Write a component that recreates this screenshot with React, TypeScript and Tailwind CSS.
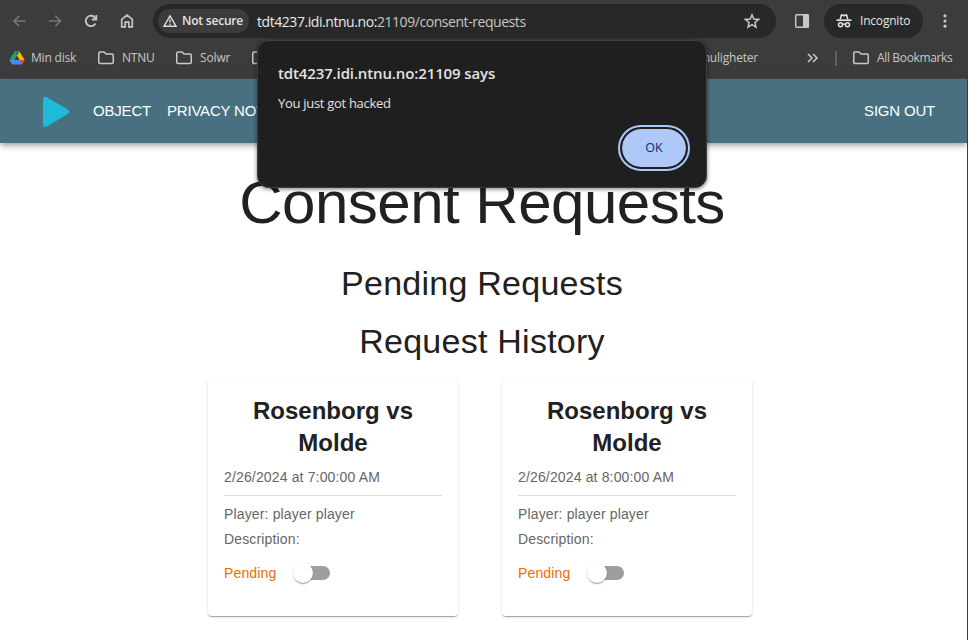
import React from 'react';

const UI = "font-['Open_Sans','Noto_Sans',sans-serif]";

function Folder({ className = '' }: { className?: string }) {
  return (
    <svg className={`shrink-0 ${className}`} width="18" height="16" viewBox="0 0 18 16" fill="none" stroke="#c7c7c7" strokeWidth="1.5" strokeLinejoin="round">
      <path d="M1.75 3.4c0-.8.5-1.4 1.3-1.4h4.1l1.9 2h6c.8 0 1.2.5 1.2 1.3v7c0 .8-.4 1.2-1.2 1.2H3c-.8 0-1.25-.4-1.25-1.2z" />
    </svg>
  );
}

function Toolbar() {
  return (
    <div className="flex h-[42px] items-center">
      <svg className="ml-[12px] shrink-0" width="16" height="16" viewBox="0 0 16 16" fill="none" stroke="#777" strokeWidth="1.6">
        <path d="M13.5 8H2.2M7.3 2.7L2 8l5.3 5.3" />
      </svg>
      <svg className="ml-[19px] shrink-0" width="16" height="16" viewBox="0 0 16 16" fill="none" stroke="#777" strokeWidth="1.6">
        <path d="M2 8h11.3M8.2 2.7L13.5 8l-5.3 5.3" />
      </svg>
      <svg className="ml-[20px] shrink-0" width="16" height="16" viewBox="0 0 16 16" fill="none" stroke="#c7c7c7" strokeWidth="1.8">
        <path d="M12.5 10.5A5.2 5.2 0 1 1 12.3 5l.8 1.2" />
        <path d="M13.3 2v4.5H8.8" />
      </svg>
      <svg className="ml-[20px] shrink-0" width="16" height="16" viewBox="0 0 16 16" fill="none" stroke="#c7c7c7" strokeWidth="1.7">
        <path d="M2.7 6.3L8 2.1l5.3 4.2v7.6H9.8V9.2H6.2v4.7H2.7z" />
      </svg>
      <div className="ml-[18px] flex h-[34px] w-[623px] shrink-0 items-center rounded-full bg-[#282828] pl-[5px] pr-[16px]">
        <div className="flex h-6 w-[91px] items-center rounded-full bg-[#3c3c3c] pl-[5px]">
          <svg width="14" height="14" viewBox="0 0 14 14" fill="none" stroke="#dedede" strokeWidth="1.4">
            <path d="M7 1.8L13 12.2H1z" />
            <path d="M7 5.4v3.2M7 9.5v1.4" />
          </svg>
          <span className="ml-[5px] whitespace-nowrap text-[12px] font-semibold tracking-[-0.2px] text-[#e3e3e3]">Not secure</span>
        </div>
        <span className="ml-[8px] whitespace-nowrap text-[14px] tracking-[-0.44px] text-[#c7c7c7]">
          <span className="text-[#e8e8e8]">tdt4237.idi.ntnu.no:</span>21109/consent-requests
        </span>
        <svg className="ml-auto" width="16" height="16" viewBox="0 0 16 16" fill="none" stroke="#c7c7c7" strokeWidth="1.5">
          <path d="M8 1.8l1.8 4.3 4.7.4-3.6 3.1 1.1 4.6L8 11.7l-4 2.5 1.1-4.6-3.6-3.1 4.7-.4z" />
        </svg>
      </div>
      <svg className="ml-[18px] shrink-0" width="16" height="16" viewBox="0 0 16 16">
        <rect x="1.7" y="1.7" width="12.6" height="12.6" rx="1" fill="none" stroke="#c7c7c7" strokeWidth="1.5" />
        <path d="M9 1h4.5a1.5 1.5 0 0 1 1.5 1.5v11a1.5 1.5 0 0 1-1.5 1.5H9z" fill="#c7c7c7" />
      </svg>
      <div className="ml-[14px] flex h-[34px] w-[99px] shrink-0 items-center rounded-full bg-[#282828] pl-[12px]">
        <svg width="16" height="16" viewBox="0 0 16 16" fill="none" stroke="#e3e3e3">
          <path d="M4.2 6.4L5.5 1.9l2.5.7 2.5-.7 1.3 4.5" strokeWidth="1.6" />
          <path d="M.5 7.2h15" strokeWidth="1.7" />
          <circle cx="4.5" cy="11.8" r="2" strokeWidth="1.5" />
          <circle cx="11.5" cy="11.8" r="2" strokeWidth="1.5" />
          <path d="M6.3 11.4q1.7-.9 3.4 0" strokeWidth="1.4" />
        </svg>
        <span className="ml-[8px] text-[12px] tracking-[-0.2px] text-[#e3e3e3]">Incognito</span>
      </div>
      <svg className="ml-[14px] shrink-0" width="16" height="16" viewBox="0 0 16 16" fill="#c7c7c7">
        <circle cx="8" cy="2.8" r="1.6" />
        <circle cx="8" cy="8" r="1.6" />
        <circle cx="8" cy="13.2" r="1.6" />
      </svg>
    </div>
  );
}

function Bookmarks() {
  return (
    <div className="flex h-8 items-center whitespace-nowrap text-[12px] text-[#c7c7c7]">
      <svg className="ml-[9px] shrink-0" width="16" height="14" viewBox="0 0 16 14">
        <path d="M5.5.5h5L8 4.8 3.2 13 .5 8.8z" fill="#1ea362" />
        <path d="M5.5.5h5l5 8.6h-5z" fill="#ffba00" />
        <path d="M5.5.5h5L8 4.8z" fill="#11814a" />
        <path d="M.5 9h15L13 13.5H3z" fill="#4688f4" />
        <path d="M10.5 9h5L13 13.5z" fill="#ea4335" />
        <path d="M8 5l2.4 4H5.7z" fill="#3c3c3c" />
      </svg>
      <span className="ml-[6px] w-[46px] tracking-[-0.2px]">Min disk</span>
      <Folder className="ml-[20px]" />
      <span className="ml-[7px] w-[33px] tracking-[-0.25px]">NTNU</span>
      <Folder className="ml-[20px]" />
      <span className="ml-[7px] w-[31px] tracking-[-0.15px]">Solwr</span>
      <Folder className="ml-[20px]" />
      <span className="ml-[7px] w-[483px] pr-px text-right tracking-[-0.2px]">Karrieremuligheter</span>
      <svg className="ml-[48px] shrink-0" width="12" height="10" viewBox="0 0 12 10" fill="none" stroke="#c7c7c7" strokeWidth="1.6">
        <path d="M1 1l4 4-4 4M6 1l4 4-4 4" />
      </svg>
      <div className="ml-[16px] h-[15px] w-[2px] bg-[#5f5f5f]" />
      <Folder className="ml-[15px]" />
      <span className="ml-[7px] tracking-[-0.35px]">All Bookmarks</span>
    </div>
  );
}

function RequestCard({ time }: { time: string }) {
  return (
    <div className="h-[237px] w-[250px] rounded-[4px] bg-white px-4 pt-4 shadow-[0_2px_1px_-1px_rgba(0,0,0,0.2),0_1px_1px_0_rgba(0,0,0,0.14),0_1px_3px_0_rgba(0,0,0,0.12)]">
      <h3 className="text-center text-[24px] font-bold leading-8 text-[#212121]">
        Rosenborg vs
        <br />
        Molde
      </h3>
      <div className="mt-[8px] text-[14px] leading-5 tracking-[0.15px] text-[#666]">2/26/2024 at {time}</div>
      <div className="mt-[8px] h-px bg-[#dedede]" />
      <div className="mt-[8px] text-[14px] leading-5 tracking-[0.15px] text-[#666]">Player: player player</div>
      <div className="mt-[5px] text-[14px] leading-5 tracking-[0.15px] text-[#666]">Description:</div>
      <div className="mt-[14px] flex h-5 items-center">
        <span className="w-[52px] whitespace-nowrap text-[14px] tracking-[0.15px] text-[#ed6c02]">Pending</span>
        <div className="ml-[20px] flex h-[14px] w-[34px] items-center rounded-full bg-[#9e9e9e]">
          <div className="-ml-[3px] h-5 w-5 shrink-0 rounded-full bg-white shadow-[0_2px_1px_-1px_rgba(0,0,0,0.2),0_1px_1px_0_rgba(0,0,0,0.14),0_1px_3px_0_rgba(0,0,0,0.12)]" />
        </div>
      </div>
    </div>
  );
}

export default function App() {
  return (
    <div className="relative h-[640px] w-[968px] overflow-hidden border-r border-[#3c3c3c] bg-white font-['Liberation_Sans',sans-serif]">
      <div className={`h-[79px] w-[968px] border-b border-[#4a4a4a] bg-[#3c3c3c] ${UI}`}>
        <Toolbar />
        <Bookmarks />
      </div>
      <nav className="flex h-16 items-center whitespace-nowrap bg-[#487080] text-[15px] tracking-[-0.2px] text-white shadow-[0_2px_4px_-1px_rgba(0,0,0,0.2),0_4px_5px_0_rgba(0,0,0,0.14),0_1px_10px_0_rgba(0,0,0,0.12)]">
        <svg className="ml-[42px] mt-px shrink-0" width="28" height="32" viewBox="0 0 28 32" fill="#1fbad6">
          <path d="M1 3.2C1 1 3 .2 4.8 1.2l21 12.4c1.8 1.1 1.8 3.2 0 4.3L4.8 30.6C3 31.6 1 30.8 1 28.6z" />
        </svg>
        <span className="ml-[23px]">OBJECT</span>
        <span className="ml-[16px]">PRIVACY NOTICE</span>
        <span className="ml-auto mr-[32px]">SIGN OUT</span>
      </nav>
      <main className="flex w-[964px] flex-col items-center text-[#212121]">
        <h1 className="mt-[24px] text-[60px] leading-[72px] tracking-[-0.5px]">Consent Requests</h1>
        <h2 className="mt-[23px] text-[34px] leading-[42px] tracking-[0.25px]">Pending Requests</h2>
        <h2 className="mt-[16px] text-[34px] leading-[42px] tracking-[0.25px]">Request History</h2>
        <div className="mr-[4px] mt-[17px] flex gap-[44px]">
          <RequestCard time="7:00:00 AM" />
          <RequestCard time="8:00:00 AM" />
        </div>
      </main>
      <div
        role="dialog"
        className={`absolute left-[257px] top-[40px] flex h-[148px] w-[450px] flex-col rounded-[12px] border border-[#3c4043] bg-[#1f1f1f] px-[20px] text-[#e3e3e3] shadow-[0_1px_4px_rgba(0,0,0,0.55)] ${UI}`}
      >
        <div className="mt-[22px] whitespace-nowrap text-[15px] font-semibold leading-5 tracking-[-0.13px]">tdt4237.idi.ntnu.no:21109 says</div>
        <div className="mt-[10px] whitespace-nowrap text-[13px] leading-5 tracking-[-0.3px]">You just got hacked</div>
        <div className="-mr-[2px] mt-[14px] flex h-[42px] w-[68px] items-center justify-center self-end rounded-full border-2 border-[#1f1f1f] bg-[#aec9f8] bg-clip-padding text-[12.5px] text-[#062e6f] outline-2 outline-[#a8c7fa]">
          OK
        </div>
      </div>
    </div>
  );
}
